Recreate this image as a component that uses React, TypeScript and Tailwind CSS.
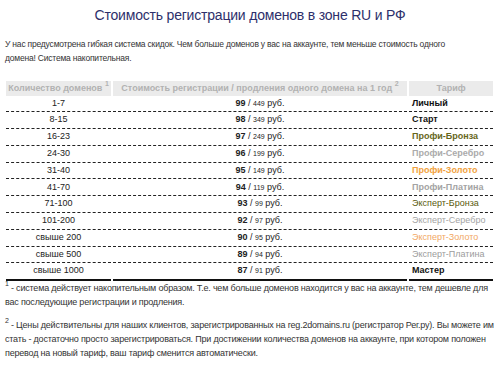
import type React from 'react'

interface PriceRow {
  range: string
  price: number
  oldPrice: number
  tariff: string
  tariffClass: string
}

const rows: PriceRow[] = [
  { range: '1-7', price: 99, oldPrice: 449, tariff: 'Личный', tariffClass: 'font-bold text-[#111]' },
  { range: '8-15', price: 98, oldPrice: 349, tariff: 'Старт', tariffClass: 'font-bold text-[#111]' },
  { range: '16-23', price: 97, oldPrice: 249, tariff: 'Профи-Бронза', tariffClass: 'font-bold text-[#66661a]' },
  { range: '24-30', price: 96, oldPrice: 199, tariff: 'Профи-Серебро', tariffClass: 'font-bold text-[#ababab]' },
  { range: '31-40', price: 95, oldPrice: 149, tariff: 'Профи-Золото', tariffClass: 'font-bold text-[#f2a13c]' },
  { range: '41-70', price: 94, oldPrice: 119, tariff: 'Профи-Платина', tariffClass: 'font-bold text-[#a3a3a3]' },
  { range: '71-100', price: 93, oldPrice: 99, tariff: 'Эксперт-Бронза', tariffClass: 'text-[#5a5a0c]' },
  { range: '101-200', price: 92, oldPrice: 97, tariff: 'Эксперт-Серебро', tariffClass: 'text-[#a3a3a3]' },
  { range: 'свыше 200', price: 90, oldPrice: 95, tariff: 'Эксперт-Золото', tariffClass: 'text-[#f2a865]' },
  { range: 'свыше 500', price: 89, oldPrice: 94, tariff: 'Эксперт-Платина', tariffClass: 'text-[#9c9c9c]' },
  { range: 'свыше 1000', price: 87, oldPrice: 91, tariff: 'Мастер', tariffClass: 'font-bold text-[#111]' },
]

function Sup({ children }: { children: React.ReactNode }) {
  return <sup className="relative -top-[1px] align-super text-[7px] leading-none">{children}</sup>
}

export default function App() {
  return (
    <div className="h-[379px] w-[500px] overflow-hidden bg-white font-['Liberation_Sans',Arial,sans-serif] text-[#333]">
      <h1 className="pt-[5px] text-center text-[14px] leading-[20px] tracking-[-0.2px] text-[#2d2f6b]">
        Стоимость регистрации доменов в зоне RU и РФ
      </h1>

      <p className="mt-[12px] whitespace-nowrap px-[5px] text-[8.5px] leading-[14px] tracking-[-0.2px]">
        У нас предусмотрена гибкая система скидок. Чем больше доменов у вас на аккаунте, тем меньше стоимость одного
        <br />
        домена! Система накопительная.
      </p>

      <table className="ml-[4px] mt-[16px] border-separate border-spacing-x-[2px] border-spacing-y-0 text-[9px] text-[#222]">
        <thead>
          <tr className="h-[13px]">
            <th className="w-[105px] bg-[#ebebeb] text-center font-bold text-[#b2b2b2]">
              Количество доменов <Sup>1</Sup>
            </th>
            <th className="w-[294px] bg-[#ebebeb] text-center font-bold text-[#b2b2b2]">
              Стоимость регистрации / продления одного домена на 1 год <Sup>2</Sup>
            </th>
            <th className="w-[84px] bg-[#ebebeb] text-center font-bold text-[#b2b2b2]">Тариф</th>
          </tr>
        </thead>
        <tbody>
          {rows.map((row, idx) => {
            const last = idx === rows.length - 1
            const border = last ? 'border-b-2 border-solid border-[#111]' : 'border-b border-dashed border-[#222]'
            return (
              <tr key={row.range} className={last ? 'h-[17.5px]' : 'h-[16.8px]'}>
                <td className={`${border} text-center`}>{row.range}</td>
                <td className={`${border} text-center`}>
                  <span className="font-bold">{row.price}</span> / <span className="text-[7px]">{row.oldPrice}</span> руб.
                </td>
                <td className={`${border} pl-[3px] text-left ${row.tariffClass}`}>{row.tariff}</td>
              </tr>
            )
          })}
        </tbody>
      </table>

      <div className="whitespace-nowrap px-[5px] text-[9px] leading-[14px] tracking-[-0.2px]">
        <p>
          <Sup>1</Sup> - система действует накопительным образом. Т.е. чем больше доменов находится у вас на аккаунте, тем дешевле для
          <br />
          вас последующие регистрации и продления.
        </p>
        <p className="mt-[9px]">
          <Sup>2</Sup> - Цены действительны для наших клиентов, зарегистрированных на reg.2domains.ru (регистратор Рег.ру). Вы можете им
          <br />
          стать - достаточно просто зарегистрироваться. При достижении количества доменов на аккаунте, при котором положен
          <br />
          перевод на новый тариф, ваш тариф сменится автоматически.
        </p>
      </div>
    </div>
  )
}
